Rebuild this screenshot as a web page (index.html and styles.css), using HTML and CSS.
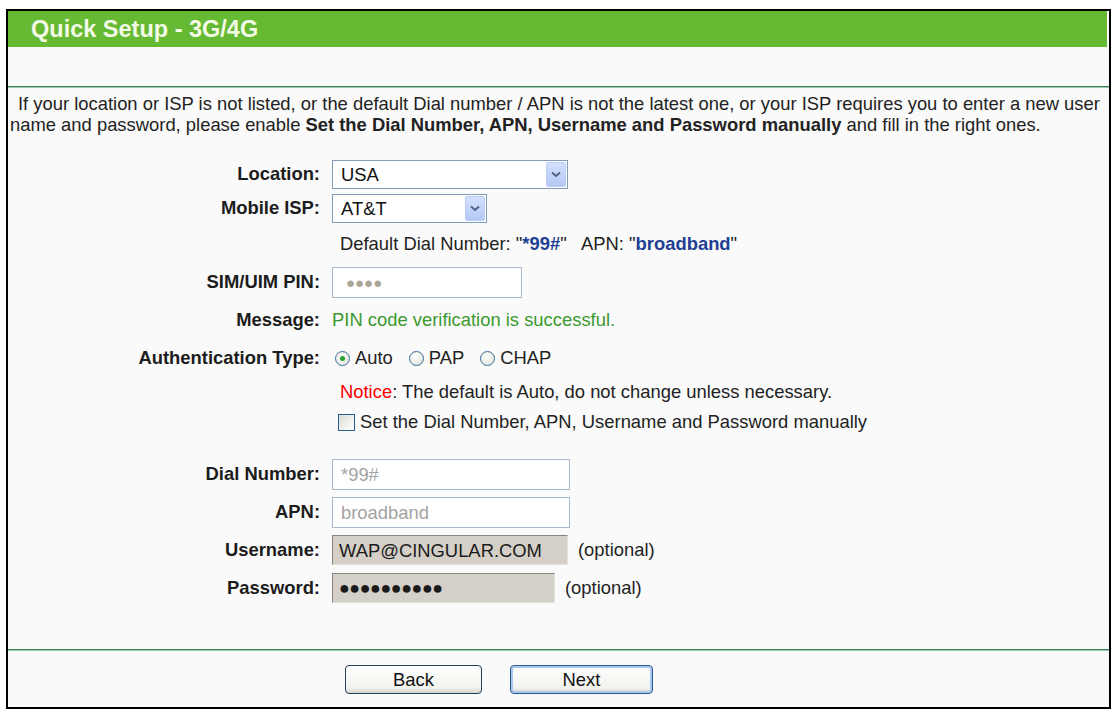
FILE: index.html
```html
<!DOCTYPE html>
<html lang="en">
<head>
<meta charset="UTF-8" />
<title>Quick Setup - 3G/4G</title>
<link rel="stylesheet" href="styles.css">
</head>
<body>

<div class="panel">
  <div class="title">Quick Setup - 3G/4G</div>
  <div class="blank"></div>
  <div class="sep"></div>

  <p class="intro">If your location or ISP is not listed, or the default Dial number / APN is not the latest one, or your ISP requires you to enter a new user<br>name and password, please enable <b>Set the Dial Number, APN, Username and Password manually</b> and fill in the right ones.</p>

  <div class="form">
    <div class="row tight">
      <div class="lbl">Location:</div>
      <div class="ctl">
        <div class="select loc">USA<span class="drop"><svg width="10" height="7" viewBox="0 0 10 7"><path d="M1 1.5 L5 5 L9 1.5" fill="none" stroke="#4d6185" stroke-width="2"/></svg></span></div>
      </div>
    </div>
    <div class="row tight">
      <div class="lbl">Mobile ISP:</div>
      <div class="ctl">
        <div class="select isp">AT&amp;T<span class="drop"><svg width="10" height="7" viewBox="0 0 10 7"><path d="M1 1.5 L5 5 L9 1.5" fill="none" stroke="#4d6185" stroke-width="2"/></svg></span></div>
      </div>
    </div>
    <div class="row">
      <div class="lbl"></div>
      <div class="ctl text">Default Dial Number: "<b class="val">*99#</b>"&nbsp;&nbsp; APN: "<b class="val">broadband</b>"</div>
    </div>
    <div class="row">
      <div class="lbl">SIM/UIM PIN:</div>
      <div class="ctl"><div class="input pin">&#9679;&#9679;&#9679;&#9679;</div></div>
    </div>
    <div class="row">
      <div class="lbl">Message:</div>
      <div class="ctl ok">PIN code verification is successful.</div>
    </div>
    <div class="row">
      <div class="lbl">Authentication Type:</div>
      <div class="ctl radios">
        <span class="opt"><span class="radio on"></span>Auto</span>
        <span class="opt"><span class="radio"></span>PAP</span>
        <span class="opt"><span class="radio"></span>CHAP</span>
      </div>
    </div>
    <div class="row short">
      <div class="lbl"></div>
      <div class="ctl text"><span class="notice">Notice</span>: The default is Auto, do not change unless necessary.</div>
    </div>
    <div class="row short">
      <div class="lbl"></div>
      <div class="ctl check"><span class="box"></span>Set the Dial Number, APN, Username and Password manually</div>
    </div>
    <div class="spacer"></div>
    <div class="row">
      <div class="lbl">Dial Number:</div>
      <div class="ctl"><div class="input off">*99#</div></div>
    </div>
    <div class="row">
      <div class="lbl">APN:</div>
      <div class="ctl"><div class="input off">broadband</div></div>
    </div>
    <div class="row">
      <div class="lbl">Username:</div>
      <div class="ctl"><div class="input grey user">WAP@CINGULAR.COM</div><span class="opt-note">(optional)</span></div>
    </div>
    <div class="row">
      <div class="lbl">Password:</div>
      <div class="ctl"><div class="input grey pass">&#9679;&#9679;&#9679;&#9679;&#9679;&#9679;&#9679;&#9679;&#9679;&#9679;</div><span class="opt-note">(optional)</span></div>
    </div>
  </div>

  <div class="sep"></div>
  <div class="buttons">
    <button class="btn">Back</button>
    <button class="btn focus">Next</button>
  </div>
</div>

</body>
</html>
```

FILE: styles.css
```css
body {
  margin: 0;
  padding: 9px 0 0 6px;
  background: #fff;
  font-family: "Liberation Sans", Arial, sans-serif;
  font-size: 18.4px;
  color: #222;
}
.panel {
  width: 1105px;
  height: 700px;
  box-sizing: border-box;
  border: 2px solid #000;
  background: #fafafa;
}
.title {
  height: 36px;
  margin-right: 2px;
  padding-left: 23px;
  background: #66b933;
  color: #f3fae6;
  font-size: 23.5px;
  font-weight: bold;
  line-height: 36px;
}
.blank {
  height: 39px;
}
.sep {
  height: 0;
  border-top: 1px solid #3d7f59;
  border-bottom: 1px solid #9cc9ae;
}
.intro {
  margin: 0;
  padding: 5px 0 0 2px;
  text-indent: 8px;
  line-height: 21px;
}
.form {
  padding-top: 22px;
  height: 514px;
  box-sizing: border-box;
}
.row {
  display: flex;
  align-items: center;
  height: 38px;
}
.row.tight {
  height: 34px;
}
.row.short {
  height: 30px;
}
.spacer {
  height: 18px;
}
.lbl {
  width: 312px;
  flex: none;
  text-align: right;
  font-weight: bold;
  color: #1c1c1c;
}
.ctl {
  display: flex;
  align-items: center;
  margin-left: 12px;
}
.ctl.text {
  margin-left: 20px;
}
.val {
  color: #1f3f94;
}
.ok {
  color: #3a992e;
}
.notice {
  color: #ff0000;
}

/* selects */
.select {
  position: relative;
  height: 29px;
  box-sizing: border-box;
  border: 1px solid #7f9db9;
  background: #fff;
  padding-left: 8px;
  line-height: 27px;
  color: #111;
}
.select.loc {
  width: 236px;
}
.select.isp {
  width: 155px;
}
.drop {
  position: absolute;
  right: 1px;
  top: 1px;
  bottom: 1px;
  width: 20px;
  display: flex;
  align-items: center;
  justify-content: center;
  background: linear-gradient(#d3e0fc, #b4c9f6);
  border: 1px solid #bccdf5;
  box-sizing: border-box;
  border-radius: 2px;
}

/* text boxes */
.input {
  height: 31px;
  box-sizing: border-box;
  border: 1px solid #a9b8c9;
  background: #fff;
  padding-left: 8px;
  line-height: 29px;
}
.input.pin {
  width: 190px;
  color: #aaa596;
  font-size: 15px;
  letter-spacing: 0;
  padding-left: 13px;
}
.input.off {
  width: 238px;
  color: #a3a3a3;
}
.input.grey {
  height: 30px;
  background: #d4d0c8;
  border-color: #8a8780 #e6e3dc #e6e3dc #8a8780;
  color: #1a1a1a;
  padding-left: 6px;
}
.input.user {
  width: 236px;
}
.input.pass {
  width: 223px;
  font-size: 18px;
  letter-spacing: -0.5px;
}
.opt-note {
  margin-left: 10px;
}

/* radios and checkbox */
.radios {
  margin-left: 15px;
}
.opt {
  display: flex;
  align-items: center;
  margin-right: 16px;
}
.radio {
  width: 13px;
  height: 13px;
  border: 1px solid #3a6e9c;
  border-radius: 50%;
  background: radial-gradient(circle at 40% 40%, #fff, #dcdcd4);
  margin-right: 5px;
  display: flex;
  align-items: center;
  justify-content: center;
}
.radio.on::after {
  content: "";
  width: 5px;
  height: 5px;
  border-radius: 50%;
  background: #2aa12a;
}
.check {
  margin-left: 18px;
}
.box {
  width: 15px;
  height: 15px;
  border: 1px solid #2d5d8a;
  background: linear-gradient(135deg, #dcdcd6, #fff);
  margin-right: 5px;
}

/* buttons */
.buttons {
  display: flex;
  gap: 28px;
  padding: 14px 0 0 337px;
}
.btn {
  width: 137px;
  height: 29px;
  border: 1px solid #22405f;
  border-radius: 4px;
  background: linear-gradient(#fefefe, #f2f2ee 80%, #d8d4cc);
  font-family: "Liberation Sans", Arial, sans-serif;
  font-size: 18.4px;
  color: #111;
  padding: 0;
}
.btn.focus {
  width: 143px;
  border-color: #2a5a96;
  box-shadow: inset 0 0 0 2px #a9c7ec;
}
```
